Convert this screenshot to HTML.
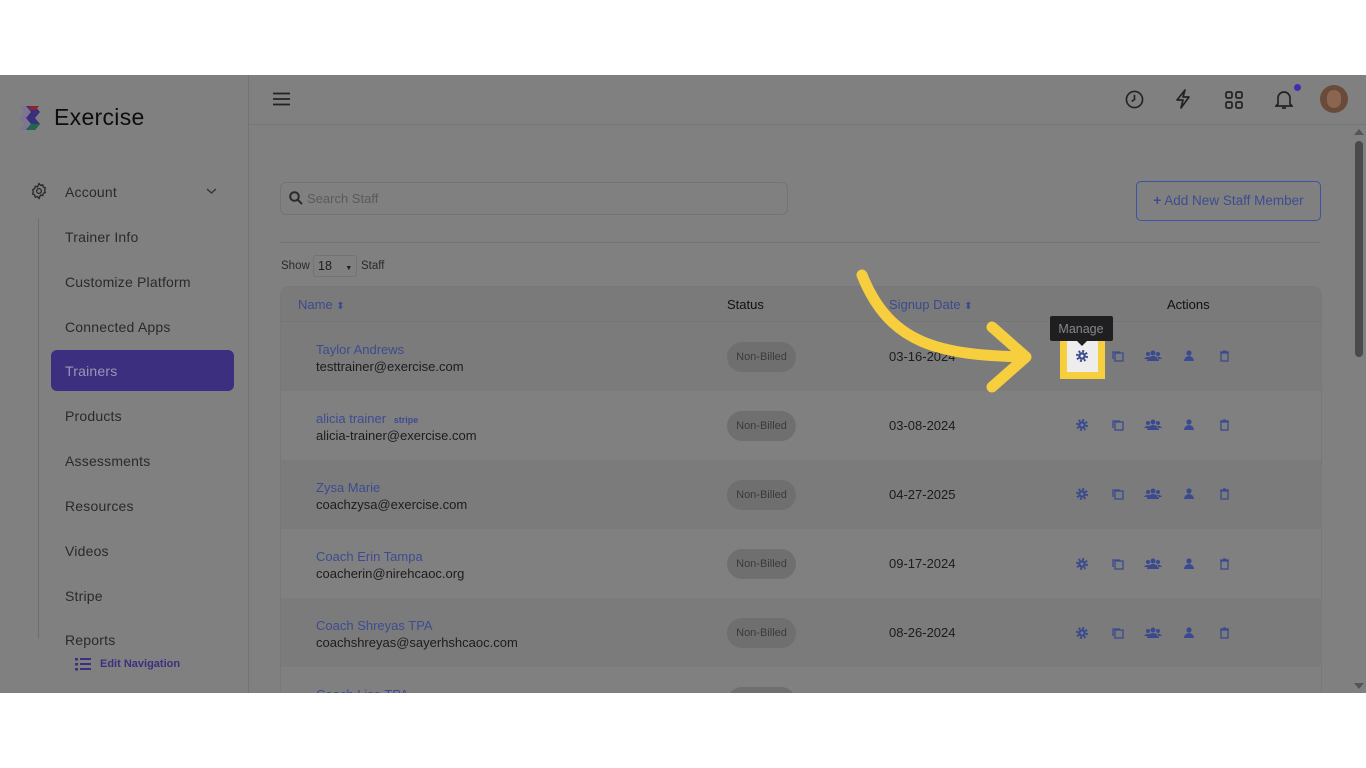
<!DOCTYPE html>
<html><head><meta charset="utf-8"><style>
*{box-sizing:border-box;margin:0;padding:0}
body{width:1366px;height:768px;background:#fff;position:relative;overflow:hidden;font-family:"Liberation Sans",sans-serif}
#app{position:absolute;left:0;top:75px;width:1366px;height:618px;background:#808080;overflow:hidden}
.abs{position:absolute}
.side{left:0;top:0;width:249px;height:618px;border-right:1px solid #737373}
.nav{position:absolute;left:65px;font-size:14px;color:#2a2a2a;letter-spacing:.2px}
.hdr{left:249px;top:0;right:0;height:50px;border-bottom:1px solid #757575}
.blue{color:#3b4a8f}
.row{position:absolute;left:281px;width:1040px;height:69px}
.nm{position:absolute;left:35px;top:20px;font-size:13px;color:#3d4c91}
.em{position:absolute;left:35px;top:37px;font-size:13px;color:#1c1c1c}
.pill{position:absolute;left:446px;top:20px;width:69px;height:30px;border-radius:15px;background:#6f6f6f;color:#3a3a3a;font-size:11px;text-align:center;line-height:30px}
.dt{position:absolute;left:608px;top:27px;font-size:13px;color:#1c1c1c}
</style></head><body>
<div id="app">
 <div class="abs side">
  <svg class="abs" style="left:17px;top:29px" width="28" height="28" viewBox="0 0 28 28">
   <path d="M2 2h9l5 6-5 6 5 6-5 6H2l5-6-5-6 5-6z" fill="#7e7690"/>
   <path d="M9 2h9l5 6-5 6 5 6-5 6H9l5-6-5-6 5-6z" fill="#38307a"/>
   <path d="M13 2h9l-3 4h-7z" fill="#8a2430"/>
   <path d="M14 20h9l-5 6h-8z" fill="#1f6a46"/>
  </svg>
  <div class="abs" style="left:54px;top:29px;font-size:23px;color:#0d0d0d;letter-spacing:.3px">Exercise</div>
  <svg class="abs" style="left:30px;top:107px" width="18" height="18" viewBox="0 0 24 24" fill="none" stroke="#2a2a2a" stroke-width="1.8"><circle cx="12" cy="12" r="3.2"/><path d="M12 2l2 2.5 3-.8.8 3 2.7 1.3-1 2.9 1 3-2.7 1.2-.8 3-3-.7L12 22l-2-2.5-3 .7-.8-3L3.5 16l1-3-1-2.9 2.7-1.3.8-3 3 .8z"/></svg>
  <div class="nav" style="top:109px">Account</div>
  <svg class="abs" style="left:206px;top:112px" width="11" height="8" viewBox="0 0 11 8"><path d="M1 2l4.5 4L10 2" stroke="#333" stroke-width="1.3" fill="none"/></svg>
  <div class="abs" style="left:38px;top:144px;width:1px;height:420px;background:#6e6e6e"></div>
  <div class="nav" style="top:154px">Trainer Info</div>
  <div class="nav" style="top:199px">Customize Platform</div>
  <div class="nav" style="top:244px">Connected Apps</div>
  <div class="abs" style="left:51px;top:275px;width:183px;height:41px;border-radius:6px;background:#3d2f7f"></div>
  <div class="nav" style="top:288px;color:#9a96b4">Trainers</div>
  <div class="nav" style="top:333px">Products</div>
  <div class="nav" style="top:378px">Assessments</div>
  <div class="nav" style="top:423px">Resources</div>
  <div class="nav" style="top:468px">Videos</div>
  <div class="nav" style="top:513px">Stripe</div>
  <div class="nav" style="top:557px">Reports</div>
  <svg class="abs" style="left:75px;top:583px" width="16" height="13" viewBox="0 0 16 13" fill="#3d2f7f"><rect x="0" y="0" width="3" height="2.5"/><rect x="5" y="0" width="11" height="2"/><rect x="0" y="5" width="3" height="2.5"/><rect x="5" y="5" width="11" height="2"/><rect x="0" y="10" width="3" height="2.5"/><rect x="5" y="10" width="11" height="2"/></svg>
  <div class="abs" style="left:100px;top:583px;font-size:11px;color:#3d2f7f;font-weight:bold">Edit Navigation</div>
 </div>
 <div class="abs hdr">
  <svg class="abs" style="left:24px;top:17px" width="17" height="14"><path d="M0 1.5h17M0 7h17M0 12.5h17" stroke="#222" stroke-width="1.8"/></svg>
  <svg class="abs" style="left:876px;top:15px" width="19" height="19" viewBox="0 0 20 20" fill="none" stroke="#222" stroke-width="1.7"><circle cx="10" cy="10" r="8.5"/><path d="M10 5v5l-3 2"/></svg>
  <svg class="abs" style="left:926px;top:14px" width="16" height="20" viewBox="0 0 16 20" fill="none" stroke="#222" stroke-width="1.7" stroke-linejoin="round"><path d="M10 1L2 11h6l-2 8 8-11H8z"/></svg>
  <svg class="abs" style="left:976px;top:16px" width="18" height="18" viewBox="0 0 18 18" fill="none" stroke="#222" stroke-width="1.7"><rect x="1" y="1" width="6" height="6" rx="1.5"/><rect x="11" y="1" width="6" height="6" rx="1.5"/><rect x="1" y="11" width="6" height="6" rx="1.5"/><rect x="11" y="11" width="6" height="6" rx="1.5"/></svg>
  <svg class="abs" style="left:1026px;top:15px" width="18" height="20" viewBox="0 0 18 20" fill="none" stroke="#222" stroke-width="1.7"><path d="M3 14V8a6 6 0 0 1 12 0v6l2 2H1z M7 18h4"/></svg>
  <div class="abs" style="left:1045px;top:9px;width:7px;height:7px;border-radius:50%;background:#3d2fb0"></div>
  <div class="abs" style="left:1071px;top:10px;width:28px;height:28px;border-radius:50%;background:#6a4a38;overflow:hidden"><div style="margin:5px auto;width:14px;height:18px;border-radius:7px;background:#8a6650"></div></div>
 </div>
 <div class="abs" style="left:1355px;top:66px;width:8px;height:216px;border-radius:4px;background:#4a4a4a"></div>
 <div class="abs" style="left:1354px;top:54px;width:0;height:0;border:5px solid transparent;border-bottom:6px solid #555;border-top:0"></div>
 <div class="abs" style="left:1354px;top:608px;width:0;height:0;border:5px solid transparent;border-top:6px solid #555;border-bottom:0"></div>
 <div class="abs" style="left:280px;top:107px;width:508px;height:33px;border:1px solid #747474;border-radius:6px"></div>
 <svg class="abs" style="left:289px;top:116px" width="14" height="14" viewBox="0 0 14 14" fill="none" stroke="#2a2a2a" stroke-width="2"><circle cx="5.5" cy="5.5" r="4.3"/><path d="M8.8 8.8L13 13"/></svg>
 <div class="abs" style="left:307px;top:116px;font-size:13px;color:#5a5a5a">Search Staff</div>
 <div class="abs" style="left:1136px;top:106px;width:185px;height:40px;border:1.5px solid #3d52a8;border-radius:5px;color:#3d4c91;font-size:13.5px;text-align:center;line-height:38px"><b>+</b> Add New Staff Member</div>
 <div class="abs" style="left:280px;top:167px;width:1041px;height:1px;background:#747474"></div>
 <div class="abs" style="left:281px;top:185px;font-size:11.5px;color:#2a2a2a">Show</div>
 <div class="abs" style="left:313px;top:180px;width:44px;height:22px;border:1px solid #737373;border-radius:3px;font-size:12.5px;color:#1c1c1c;padding:3px 0 0 4px">18 <span style="font-size:7px;margin-left:10px">▼</span></div>
 <div class="abs" style="left:361px;top:185px;font-size:11.5px;color:#2a2a2a">Staff</div>
 <div class="abs" style="left:280px;top:211px;width:1042px;height:420px;border-radius:10px;background:#7d7d7d;border:1px solid #787878;overflow:hidden">
  <div style="height:35px;background:#7a7a7a;border-bottom:1px solid #757575"></div>
 </div>
 <div class="abs blue" style="left:298px;top:222px;font-size:13px">Name <span style="font-size:10px">⬍</span></div>
 <div class="abs" style="left:727px;top:222px;font-size:13px;color:#111">Status</div>
 <div class="abs blue" style="left:889px;top:222px;font-size:13px">Signup Date <span style="font-size:10px">⬍</span></div>
 <div class="abs" style="left:1167px;top:222px;font-size:13px;color:#111">Actions</div>
 <div class="row" style="top:247px;background:#7b7b7b"><div class="nm">Taylor Andrews</div><div class="em">testtrainer@exercise.com</div><div class="pill">Non-Billed</div><div class="dt">03-16-2024</div></div>
 <div class="row" style="top:316px;background:#808080"><div class="nm">alicia trainer <b style="font-size:9px;margin-left:4px">stripe</b></div><div class="em">alicia-trainer@exercise.com</div><div class="pill">Non-Billed</div><div class="dt">03-08-2024</div></div>
 <div class="row" style="top:385px;background:#7b7b7b"><div class="nm">Zysa Marie</div><div class="em">coachzysa@exercise.com</div><div class="pill">Non-Billed</div><div class="dt">04-27-2025</div></div>
 <div class="row" style="top:454px;background:#808080"><div class="nm">Coach Erin Tampa</div><div class="em">coacherin@nirehcaoc.org</div><div class="pill">Non-Billed</div><div class="dt">09-17-2024</div></div>
 <div class="row" style="top:523px;background:#7b7b7b"><div class="nm">Coach Shreyas TPA</div><div class="em">coachshreyas@sayerhshcaoc.com</div><div class="pill">Non-Billed</div><div class="dt">08-26-2024</div></div>
 <div class="row" style="top:592px;background:#808080"><div class="nm">Coach Lisa TPA</div><div class="pill"></div></div>
 <svg width="1366" height="618" class="abs" style="left:0;top:0">
  <defs>
   <g id="acts" fill="#3b4a8f">
    <circle cx="0" cy="0" r="3.8"/>
    <circle cx="0" cy="0" r="4.9" fill="none" stroke="#3b4a8f" stroke-width="2.2" stroke-dasharray="2 1.85"/>
    <rect x="33" y="-3" width="8" height="8" fill="none" stroke="#3b4a8f" stroke-width="1.3"/><path d="M31 3v-7h7" fill="none" stroke="#3b4a8f" stroke-width="1.3"/>
    <circle cx="71" cy="-3" r="2.5"/><circle cx="66" cy="-2" r="2"/><circle cx="76" cy="-2" r="2"/><path d="M65 5a6 5 0 0 1 12 0zM62 3a4 3 0 0 1 5-2v2zM80 3a4 3 0 0 0-5-2v2z"/>
    <circle cx="107" cy="-3" r="2.6"/><path d="M102 5a5 5 0 0 1 10 0z"/>
    <path d="M138-4h9M141-5h3" stroke="#3b4a8f" stroke-width="1.3"/><rect x="139" y="-3" width="7" height="8" fill="none" stroke="#3b4a8f" stroke-width="1.3"/>
   </g>
  </defs>
  <rect x="1060" y="259" width="45" height="45" fill="#f7cf3e"/>
  <rect x="1067" y="266" width="31" height="31" fill="#ededed"/>
  <use href="#acts" x="1082" y="281"/>
  <circle cx="1082" cy="281" r="1.5" fill="#ededed"/>
  <use href="#acts" x="1082" y="350"/>
  <circle cx="1082" cy="350" r="1.5" fill="#808080"/>
  <use href="#acts" x="1082" y="419"/>
  <circle cx="1082" cy="419" r="1.5" fill="#7b7b7b"/>
  <use href="#acts" x="1082" y="489"/>
  <circle cx="1082" cy="489" r="1.5" fill="#808080"/>
  <use href="#acts" x="1082" y="558"/>
  <circle cx="1082" cy="558" r="1.5" fill="#7b7b7b"/>
  <rect x="1050" y="241" width="63" height="25" rx="2" fill="#1f1f22"/>
  <path d="M1077 266l5 5 5-5z" fill="#1f1f22"/>
  <text x="1081" y="258" font-size="12.5" fill="#888" text-anchor="middle" font-family="Liberation Sans">Manage</text>
  <path d="M862 200C890 270 940 280 1025 282" stroke="#f7cf3e" stroke-width="11" fill="none" stroke-linecap="round"/>
  <path d="M992 252L1026 282L992 312" stroke="#f7cf3e" stroke-width="11" fill="none" stroke-linecap="round" stroke-linejoin="round"/>
 </svg>
</div>
</body></html>
